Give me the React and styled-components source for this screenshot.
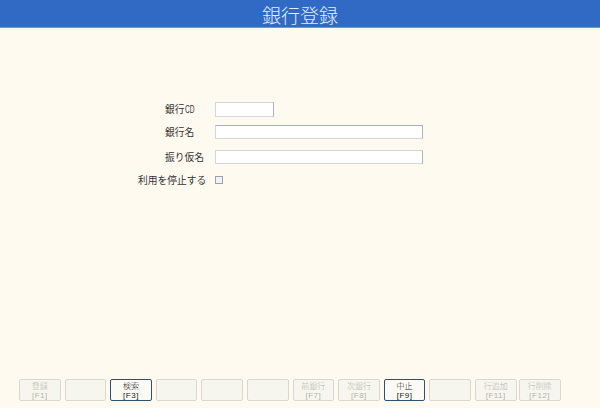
import React from "react";
import styled, { createGlobalStyle } from "styled-components";

const GlobalStyle = createGlobalStyle`
  html, body {
    margin: 0;
    padding: 0;
    background: #fffaf0;
  }
  body {
    font-family: "Noto Sans CJK JP", "Liberation Sans", sans-serif;
  }
`;

const FIELDS = [
  { label: "銀行", suffix: "CD", width: 59, height: 15 },
  { label: "銀行名", width: 208, height: 14, gap: 8, focused: true },
  { label: "振り仮名", width: 208, height: 14, gap: 11 },
];

const KEYS = [
  { name: "登録", key: "[F1]" },
  {},
  { name: "検索", key: "[F3]", active: true },
  {},
  {},
  {},
  { name: "前銀行", key: "[F7]" },
  { name: "次銀行", key: "[F8]" },
  { name: "中止", key: "[F9]", active: true },
  {},
  { name: "行追加", key: "[F11]" },
  { name: "行削除", key: "[F12]", tight: true },
];

const App = () => {
  return (
    <Page>
      <GlobalStyle />
      <Header>銀行登録</Header>
      <Form>
        {FIELDS.map((field) => (
          <Row key={field.label} $gap={field.gap} $height={field.height}>
            <Label $indent={165}>
              {field.label}
              {field.suffix && <Suffix>{field.suffix}</Suffix>}
            </Label>
            <TextInput $width={field.width} $height={field.height} $focused={field.focused} type="text" />
          </Row>
        ))}
        <Row $gap={12} $height={8}>
          <Label $indent={138}>利用を停止する</Label>
          <CheckBox />
        </Row>
      </Form>
      <Footer>
        {KEYS.map((item, i) => (
          <FunctionKey key={i} $active={item.active} $tight={item.tight}>
            {item.name && <KeyName>{item.name}</KeyName>}
            {item.key && <KeyCode>{item.key}</KeyCode>}
          </FunctionKey>
        ))}
      </Footer>
    </Page>
  );
};

export default App;

const Page = styled.div`
  width: 600px;
  height: 408px;
  overflow: hidden;
  background: #fffaf0;
  display: flex;
  flex-direction: column;
`;

const Header = styled.div`
  height: 27px;
  flex: none;
  background: #316ac5;
  border-bottom: 1px solid #6f97d6;
  color: #e4edfa;
  font-size: 19px;
  font-weight: 300;
  line-height: 29px;
  text-align: center;
`;

const Form = styled.div`
  flex: 1;
  padding-top: 74px;
  display: flex;
  flex-direction: column;
`;

const Row = styled.div`
  height: ${(props) => props.$height}px;
  margin-top: ${(props) => props.$gap || 0}px;
  display: flex;
  align-items: center;
`;

const Label = styled.div`
  width: ${(props) => 215 - props.$indent}px;
  margin-left: ${(props) => props.$indent}px;
  color: #333;
  font-size: 9.75px;
  line-height: 13px;
  white-space: nowrap;
`;

/* half width latin, squeezed like the old bitmap font */
const Suffix = styled.span`
  display: inline-block;
  font-family: "Liberation Sans", sans-serif;
  font-size: 10px;
  transform: scaleX(0.66);
  transform-origin: left center;
`;

const TextInput = styled.input`
  width: ${(props) => props.$width}px;
  height: ${(props) => props.$height}px;
  box-sizing: border-box;
  padding: 0;
  background: #fff;
  border: 1px solid #d3d6de;
  border-top-color: ${(props) => (props.$focused ? "#a3adcf" : "#d3d6de")};
  border-right-color: #a9b2cf;
  outline: none;
  border-radius: 0;
`;

const CheckBox = styled.span`
  width: 6px;
  height: 6px;
  background: #f1f2f3;
  border: 1px solid #9a9fb4;
`;

const Footer = styled.div`
  height: 29px;
  flex: none;
  box-sizing: border-box;
  padding-left: 19px;
  display: flex;
  gap: 4px;
`;

const FunctionKey = styled.div`
  width: 41.6px;
  height: 22px;
  margin-left: ${(props) => (props.$tight ? "-1.6px" : "0")};
  box-sizing: border-box;
  background: ${(props) => (props.$active ? "#fbfaf4" : "#f7f6ee")};
  border: 1px solid ${(props) => (props.$active ? "#2f4f74" : "#d8d8d0")};
  border-radius: 2px;
  color: ${(props) => (props.$active ? "#222" : "#b4b4ac")};
  display: flex;
  flex-direction: column;
  align-items: center;
  justify-content: center;
`;

const KeyName = styled.span`
  font-size: 8px;
  font-weight: 300;
  line-height: 10px;
`;

const KeyCode = styled.span`
  font-family: "Liberation Sans", sans-serif;
  font-size: 8px;
  letter-spacing: 0.5px;
  line-height: 9px;
`;
